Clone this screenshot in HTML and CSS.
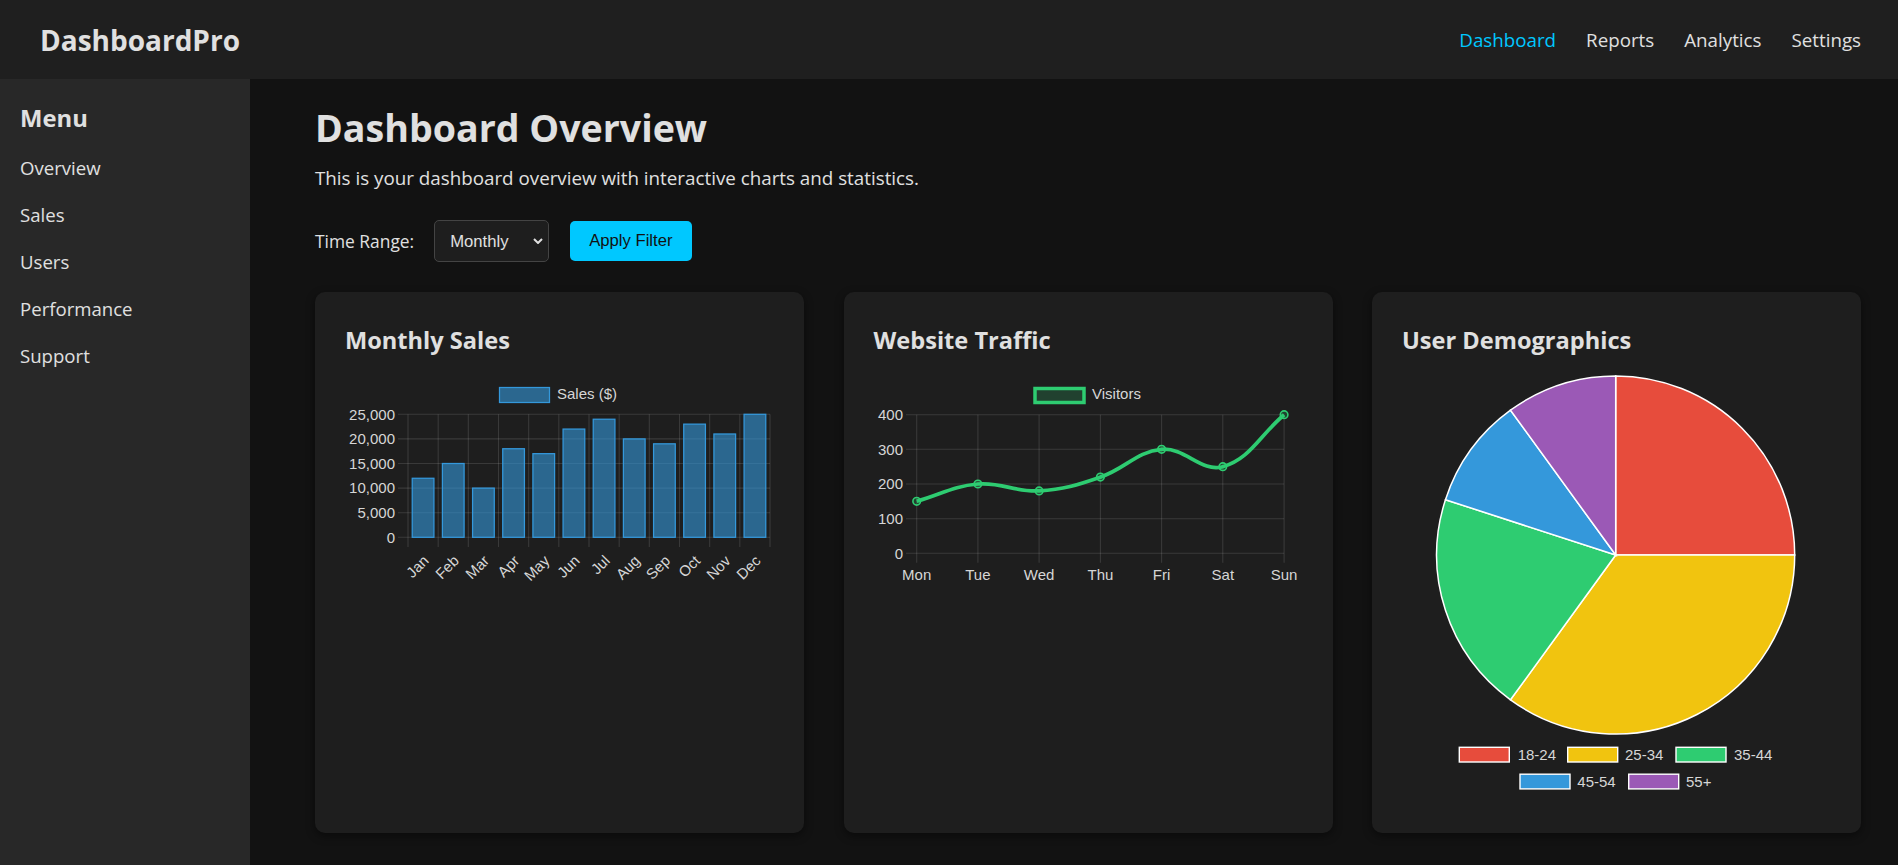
FILE: index.html
```html
<!DOCTYPE html>
<html lang="en">
<head>
<meta charset="utf-8">
<title>DashboardPro</title>
<link rel="stylesheet" href="styles.css">
</head>
<body>
<header class="topbar">
  <div class="logo">DashboardPro</div>
  <nav class="topnav">
    <a class="active" href="#">Dashboard</a>
    <a href="#">Reports</a>
    <a href="#">Analytics</a>
    <a href="#">Settings</a>
  </nav>
</header>
<div class="layout">
  <aside class="sidebar">
    <h3 class="menu-title">Menu</h3>
    <ul class="menu">
      <li><a href="#">Overview</a></li>
      <li><a href="#">Sales</a></li>
      <li><a href="#">Users</a></li>
      <li><a href="#">Performance</a></li>
      <li><a href="#">Support</a></li>
    </ul>
  </aside>
  <main class="main">
    <h1 class="page-title">Dashboard Overview</h1>
    <p class="subtitle">This is your dashboard overview with interactive charts and statistics.</p>
    <div class="filters">
      <label class="filter-label" for="range">Time Range:</label>
      <div class="select-wrap">
        <select id="range" class="select">
          <option>Monthly</option>
          <option>Weekly</option>
          <option>Daily</option>
        </select>
        <svg class="chev" viewBox="0 0 10 6" width="10" height="6"><path d="M1 1 L5 5 L9 1"/></svg>
      </div>
      <button class="btn" type="button">Apply Filter</button>
    </div>
    <section class="cards">
      <article class="card">
        <h3 class="card-title">Monthly Sales</h3>
        <svg class="chart" viewBox="0 0 429 420">
          <rect class="bar" x="154.5" y="12.5" width="50" height="15"/>
          <text class="lbl" x="212" y="24.3">Sales ($)</text>
          <path class="grid" d="M53 39.3H425M53 63.9H425M53 88.5H425M53 113.1H425M53 137.7H425M53 162.3H425"/>
          <path class="grid" d="M63 39.3V172M93.17 39.3V172M123.33 39.3V172M153.5 39.3V172M183.67 39.3V172M213.83 39.3V172M244 39.3V172M274.17 39.3V172M304.33 39.3V172M334.5 39.3V172M364.67 39.3V172M394.83 39.3V172M425 39.3V172"/>
          <g class="lbl end">
            <text x="50" y="44.6">25,000</text>
            <text x="50" y="69.2">20,000</text>
            <text x="50" y="93.8">15,000</text>
            <text x="50" y="118.4">10,000</text>
            <text x="50" y="143">5,000</text>
            <text x="50" y="167.6">0</text>
          </g>
          <g>
            <rect class="bar" x="67.23" y="103.26" width="21.7" height="59.04"/>
            <rect class="bar" x="97.4" y="88.5" width="21.7" height="73.8"/>
            <rect class="bar" x="127.57" y="113.1" width="21.7" height="49.2"/>
            <rect class="bar" x="157.73" y="73.74" width="21.7" height="88.56"/>
            <rect class="bar" x="187.9" y="78.66" width="21.7" height="83.64"/>
            <rect class="bar" x="218.07" y="54.06" width="21.7" height="108.24"/>
            <rect class="bar" x="248.23" y="44.22" width="21.7" height="118.08"/>
            <rect class="bar" x="278.4" y="63.9" width="21.7" height="98.4"/>
            <rect class="bar" x="308.57" y="68.82" width="21.7" height="93.48"/>
            <rect class="bar" x="338.73" y="49.14" width="21.7" height="113.16"/>
            <rect class="bar" x="368.9" y="58.98" width="21.7" height="103.32"/>
            <rect class="bar" x="399.07" y="39.3" width="21.7" height="123"/>
          </g>
          <g class="lbl end">
            <text transform="translate(81 183) rotate(-45)" dy="0.35em">Jan</text>
            <text transform="translate(111.2 183) rotate(-45)" dy="0.35em">Feb</text>
            <text transform="translate(141.4 183) rotate(-45)" dy="0.35em">Mar</text>
            <text transform="translate(171.6 183) rotate(-45)" dy="0.35em">Apr</text>
            <text transform="translate(201.8 183) rotate(-45)" dy="0.35em">May</text>
            <text transform="translate(231.9 183) rotate(-45)" dy="0.35em">Jun</text>
            <text transform="translate(262.1 183) rotate(-45)" dy="0.35em">Jul</text>
            <text transform="translate(292.3 183) rotate(-45)" dy="0.35em">Aug</text>
            <text transform="translate(322.4 183) rotate(-45)" dy="0.35em">Sep</text>
            <text transform="translate(352.6 183) rotate(-45)" dy="0.35em">Oct</text>
            <text transform="translate(382.8 183) rotate(-45)" dy="0.35em">Nov</text>
            <text transform="translate(412.9 183) rotate(-45)" dy="0.35em">Dec</text>
          </g>
        </svg>
      </article>
      <article class="card">
        <h3 class="card-title">Website Traffic</h3>
        <svg class="chart" viewBox="0 0 429 420">
          <rect class="legend-line" x="161" y="13.5" width="49" height="14"/>
          <text class="lbl" x="218" y="24.3">Visitors</text>
          <path class="grid" d="M32 39.7H410.1M32 74.3H410.1M32 109H410.1M32 143.7H410.1M32 178.3H410.1"/>
          <path class="grid" d="M42.7 39.7V187.7M103.9 39.7V187.7M165.1 39.7V187.7M226.4 39.7V187.7M287.6 39.7V187.7M348.8 39.7V187.7M410.1 39.7V187.7"/>
          <g class="lbl end">
            <text x="29" y="45">400</text>
            <text x="29" y="79.6">300</text>
            <text x="29" y="114.3">200</text>
            <text x="29" y="149">100</text>
            <text x="29" y="183.6">0</text>
          </g>
          <g class="lbl mid">
            <text x="42.7" y="205.3">Mon</text>
            <text x="103.9" y="205.3">Tue</text>
            <text x="165.1" y="205.3">Wed</text>
            <text x="226.4" y="205.3">Thu</text>
            <text x="287.6" y="205.3">Fri</text>
            <text x="348.8" y="205.3">Sat</text>
            <text x="410.1" y="205.3">Sun</text>
          </g>
          <path class="line" d="M42.7,126.3 C67.18,119.38 79.03,111.11 103.9,109 C127.99,106.95 140.84,117.27 165.1,115.9 C189.85,114.51 202.72,110.13 226.4,102.1 C251.72,93.51 262.45,76.49 287.6,74.35 C311.41,72.33 327.15,97.82 348.8,91.7 C376.15,83.96 385.58,60.5 410.1,39.7"/>
          <g class="pt">
            <circle cx="42.7" cy="126.3" r="3.8"/>
            <circle cx="103.9" cy="109" r="3.8"/>
            <circle cx="165.1" cy="115.9" r="3.8"/>
            <circle cx="226.4" cy="102.1" r="3.8"/>
            <circle cx="287.6" cy="74.35" r="3.8"/>
            <circle cx="348.8" cy="91.7" r="3.8"/>
            <circle cx="410.1" cy="39.7" r="3.8"/>
          </g>
        </svg>
      </article>
      <article class="card">
        <h3 class="card-title">User Demographics</h3>
        <svg class="chart" viewBox="0 0 429 420">
          <g class="pie">
            <path class="c-red" d="M213.7,180 L213.7,1 A179,179 0 0 1 392.7,180 Z"/>
            <path class="c-yellow" d="M213.7,180 L392.7,180 A179,179 0 0 1 108.49,324.81 Z"/>
            <path class="c-green" d="M213.7,180 L108.49,324.81 A179,179 0 0 1 43.46,124.69 Z"/>
            <path class="c-blue" d="M213.7,180 L43.46,124.69 A179,179 0 0 1 108.49,35.19 Z"/>
            <path class="c-purple" d="M213.7,180 L108.49,35.19 A179,179 0 0 1 213.7,1 Z"/>
          </g>
          <g class="pie-legend">
            <rect class="c-red" x="57.3" y="372.3" width="50" height="14.7"/>
            <text class="lbl" x="115.7" y="385">18-24</text>
            <rect class="c-yellow" x="165.7" y="372.3" width="50" height="14.7"/>
            <text class="lbl" x="223" y="385">25-34</text>
            <rect class="c-green" x="274" y="372.3" width="50" height="14.7"/>
            <text class="lbl" x="332" y="385">35-44</text>
            <rect class="c-blue" x="118" y="399.2" width="50" height="14.7"/>
            <text class="lbl" x="175.3" y="412">45-54</text>
            <rect class="c-purple" x="226.7" y="399.2" width="50" height="14.7"/>
            <text class="lbl" x="284" y="412">55+</text>
          </g>
        </svg>
      </article>
    </section>
  </main>
</div>
</body>
</html>
```
FILE: styles.css
```css
* { box-sizing: border-box; }

html, body {
  margin: 0;
  padding: 0;
}

body {
  background: #121212;
  color: #e0e0e0;
  font-family: "Open Sans", "Noto Sans", sans-serif;
  overflow: hidden;
}

a { color: inherit; text-decoration: none; }

.topbar {
  height: 79px;
  background: #1f1f1f;
  display: flex;
  align-items: center;
  justify-content: space-between;
  padding: 0 37px 0 40px;
}

.logo {
  font-size: 28px;
  font-weight: 700;
  color: #e0e0e0;
}

.topnav {
  display: flex;
  gap: 30px;
}

.topnav a {
  font-size: 18.75px;
  color: #e0e0e0;
}

.topnav a.active { color: #00c8ff; }

.layout {
  display: flex;
  height: calc(100vh - 79px);
}

.sidebar {
  width: 250px;
  flex: none;
  background: #282828;
  padding: 24px 20px;
}

.menu-title {
  margin: 0 0 11px;
  font-size: 23.8px;
  line-height: 30px;
  font-weight: 700;
}

.menu {
  list-style: none;
  margin: 0;
  padding: 0;
}

.menu li {
  font-size: 18.6px;
  line-height: 47px;
}

.main {
  flex: 1;
  padding: 25px 37px 32px 65px;
}

.page-title {
  margin: 0;
  font-size: 37.6px;
  line-height: 48px;
  font-weight: 700;
}

.subtitle {
  margin: 12px 0 0;
  font-size: 18.8px;
  line-height: 28px;
}

.filters {
  margin-top: 28px;
  height: 42px;
  display: flex;
  align-items: center;
}

.filter-label {
  font-size: 17.4px;
  margin-right: 20px;
}

.select-wrap {
  position: relative;
  margin-right: 20.5px;
}

.select {
  appearance: none;
  -webkit-appearance: none;
  width: 115px;
  height: 42px;
  background: #1e1e1e;
  color: #e0e0e0;
  border: 1px solid #444;
  border-radius: 5px;
  padding: 0 0 0 15px;
  font-family: "Liberation Sans", Arial, sans-serif;
  font-size: 16.67px;
  display: block;
}

.chev {
  position: absolute;
  right: 6px;
  top: 18px;
  fill: none;
  stroke: #e0e0e0;
  stroke-width: 2;
}

.btn {
  height: 40px;
  padding: 0 19.5px;
  background: #00c8ff;
  color: #121212;
  border: none;
  border-radius: 5px;
  font-family: "Liberation Sans", Arial, sans-serif;
  font-size: 16.67px;
}

.cards {
  margin-top: 30px;
  display: flex;
  gap: 39.5px;
}

.card {
  flex: 1;
  height: 541px;
  background: #1e1e1e;
  border-radius: 10px;
  padding: 30px;
  box-shadow: 0 3px 10px rgba(0, 0, 0, 0.45);
}

.card-title {
  margin: 0 0 17px;
  font-size: 23.6px;
  line-height: 36px;
  font-weight: 700;
}

.chart {
  display: block;
  width: 100%;
  height: 420px;
  overflow: visible;
}

.lbl {
  font-family: "Liberation Sans", Arial, sans-serif;
  font-size: 15px;
  fill: #d6d6d6;
}

.lbl text { fill: #d6d6d6; }

.end { text-anchor: end; }
.mid { text-anchor: middle; }

.grid {
  fill: none;
  stroke: rgba(255, 255, 255, 0.12);
  stroke-width: 1.1;
}

.bar {
  fill: rgba(52, 152, 219, 0.6);
  stroke: #3498db;
  stroke-width: 1.25;
}

.legend-line {
  fill: rgba(46, 204, 113, 0.2);
  stroke: #2ecc71;
  stroke-width: 3.5;
}

.line {
  fill: none;
  stroke: #2ecc71;
  stroke-width: 3.75;
}

.pt circle {
  fill: rgba(46, 204, 113, 0.2);
  stroke: #2ecc71;
  stroke-width: 1.6;
}

.pie path,
.pie-legend rect {
  stroke: #ffffff;
  stroke-width: 1.5;
}

.pie-legend rect { stroke-width: 1.4; }

.c-red { fill: #e74c3c; }
.c-yellow { fill: #f1c40f; }
.c-green { fill: #2ecc71; }
.c-blue { fill: #3498db; }
.c-purple { fill: #9b59b6; }
```
